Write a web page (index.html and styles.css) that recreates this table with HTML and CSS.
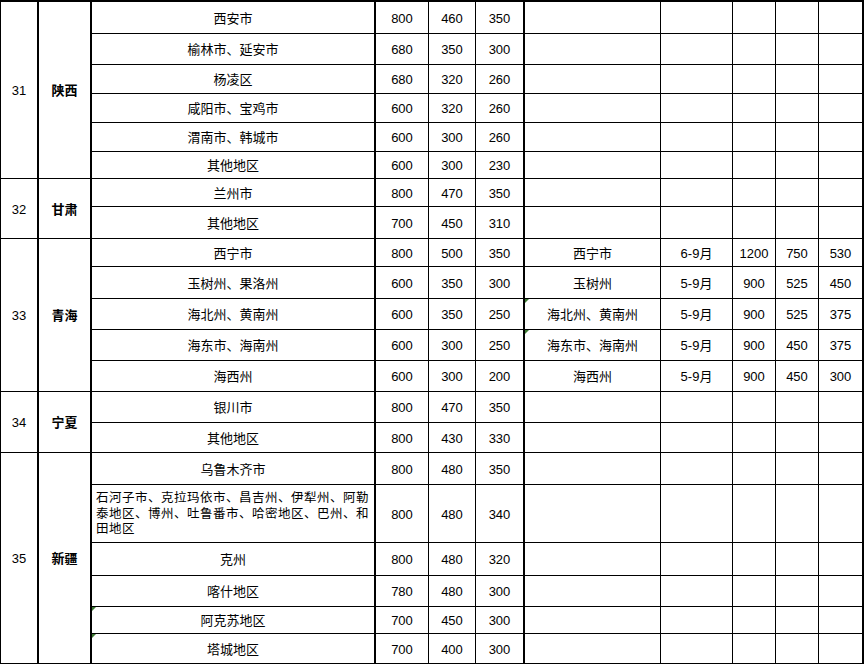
FILE: index.html
```html
<!DOCTYPE html>
<html lang="zh">
<head>
<meta charset="utf-8">
<title>住宿标准</title>
<link rel="stylesheet" href="styles.css">
</head>
<body>
<table class="grid">
  <colgroup>
    <col class="c1"><col class="c2"><col class="c3"><col class="c4"><col class="c5"><col class="c6">
    <col class="c7"><col class="c8"><col class="c9"><col class="c10"><col class="c11">
  </colgroup>
  <tbody>
    <tr class="h32">
      <td class="tk" rowspan="6">31</td><td class="tk prov" rowspan="6">陕西</td>
      <td class="tk">西安市</td><td>800</td><td>460</td><td class="tk">350</td>
      <td></td><td></td><td></td><td></td><td class="tk"></td>
    </tr>
    <tr class="h31"><td class="tk">榆林市、延安市</td><td>680</td><td>350</td><td class="tk">300</td><td></td><td></td><td></td><td></td><td class="tk"></td></tr>
    <tr class="h29"><td class="tk">杨凌区</td><td>680</td><td>320</td><td class="tk">260</td><td></td><td></td><td></td><td></td><td class="tk"></td></tr>
    <tr class="h29"><td class="tk">咸阳市、宝鸡市</td><td>600</td><td>320</td><td class="tk">260</td><td></td><td></td><td></td><td></td><td class="tk"></td></tr>
    <tr class="h29"><td class="tk">渭南市、韩城市</td><td>600</td><td>300</td><td class="tk">260</td><td></td><td></td><td></td><td></td><td class="tk"></td></tr>
    <tr class="h27"><td class="tk">其他地区</td><td>600</td><td>300</td><td class="tk">230</td><td></td><td></td><td></td><td></td><td class="tk"></td></tr>

    <tr class="h28">
      <td class="tk" rowspan="2">32</td><td class="tk prov" rowspan="2">甘肃</td>
      <td class="tk">兰州市</td><td>800</td><td>470</td><td class="tk">350</td><td></td><td></td><td></td><td></td><td class="tk"></td>
    </tr>
    <tr class="h32"><td class="tk">其他地区</td><td>700</td><td>450</td><td class="tk">310</td><td></td><td></td><td></td><td></td><td class="tk"></td></tr>

    <tr class="h28">
      <td class="tk" rowspan="5">33</td><td class="tk prov" rowspan="5">青海</td>
      <td class="tk">西宁市</td><td>800</td><td>500</td><td class="tk">350</td>
      <td>西宁市</td><td>6-9月</td><td>1200</td><td>750</td><td class="tk">530</td>
    </tr>
    <tr class="h32"><td class="tk">玉树州、果洛州</td><td>600</td><td>350</td><td class="tk">300</td><td>玉树州</td><td>5-9月</td><td>900</td><td>525</td><td class="tk">450</td></tr>
    <tr class="h31"><td class="tk">海北州、黄南州</td><td>600</td><td>350</td><td class="tk">250</td><td class="mark">海北州、黄南州</td><td>5-9月</td><td>900</td><td>525</td><td class="tk">375</td></tr>
    <tr class="h31"><td class="tk">海东市、海南州</td><td>600</td><td>300</td><td class="tk">250</td><td class="mark">海东市、海南州</td><td>5-9月</td><td>900</td><td>450</td><td class="tk">375</td></tr>
    <tr class="h31"><td class="tk">海西州</td><td>600</td><td>300</td><td class="tk">200</td><td>海西州</td><td>5-9月</td><td>900</td><td>450</td><td class="tk">300</td></tr>

    <tr class="h31">
      <td class="tk" rowspan="2">34</td><td class="tk prov" rowspan="2">宁夏</td>
      <td class="tk">银川市</td><td>800</td><td>470</td><td class="tk">350</td><td></td><td></td><td></td><td></td><td class="tk"></td>
    </tr>
    <tr class="h30"><td class="tk">其他地区</td><td>800</td><td>430</td><td class="tk">330</td><td></td><td></td><td></td><td></td><td class="tk"></td></tr>

    <tr class="h32">
      <td class="tk" rowspan="6">35</td><td class="tk prov" rowspan="6">新疆</td>
      <td class="tk">乌鲁木齐市</td><td>800</td><td>480</td><td class="tk">350</td><td></td><td></td><td></td><td></td><td class="tk"></td>
    </tr>
    <tr class="h58"><td class="tk long">石河子市、克拉玛依市、昌吉州、伊犁州、阿勒泰地区、博州、吐鲁番市、哈密地区、巴州、和田地区</td><td>800</td><td>480</td><td class="tk">340</td><td></td><td></td><td></td><td></td><td class="tk"></td></tr>
    <tr class="h33"><td class="tk">克州</td><td>800</td><td>480</td><td class="tk">320</td><td></td><td></td><td></td><td></td><td class="tk"></td></tr>
    <tr class="h31"><td class="tk">喀什地区</td><td>780</td><td>480</td><td class="tk">300</td><td></td><td></td><td></td><td></td><td class="tk"></td></tr>
    <tr class="h27"><td class="tk mark">阿克苏地区</td><td>700</td><td>450</td><td class="tk">300</td><td></td><td></td><td></td><td></td><td class="tk"></td></tr>
    <tr class="h30"><td class="tk mark">塔城地区</td><td>700</td><td>400</td><td class="tk">300</td><td></td><td></td><td></td><td></td><td class="tk"></td></tr>
  </tbody>
</table>
</body>
</html>
```

FILE: styles.css
```css
html, body {
  margin: 0;
  padding: 0;
  background: #ffffff;
}

.grid {
  table-layout: fixed;
  width: 864px;
  border-collapse: separate;
  border-spacing: 0;
  border-top: 2px solid #000;
  border-left: 1px solid #000;
  font-family: "Liberation Sans", "Noto Sans CJK SC", sans-serif;
  font-size: 13px;
  color: #000;
}

.c1 { width: 38px; }
.c2 { width: 53px; }
.c3 { width: 284px; }
.c4 { width: 53px; }
.c5 { width: 47px; }
.c6 { width: 49px; }
.c7 { width: 136px; }
.c8 { width: 72px; }
.c9 { width: 43px; }
.c10 { width: 43px; }
.c11 { width: 45px; }

.grid td {
  box-sizing: border-box;
  border-right: 1px solid #000;
  border-bottom: 1px solid #000;
  padding: 1px 0 0 0;
  text-align: center;
  vertical-align: middle;
  line-height: 15px;
  white-space: nowrap;
}

.grid td.tk {
  border-right-width: 2px;
}

.grid td.prov {
  font-weight: bold;
}

.grid td.long {
  white-space: normal;
  text-align: left;
  font-size: 12.5px;
  letter-spacing: 0.5px;
  padding: 2px 3px 0 4px;
  line-height: 15.5px;
  word-break: break-all;
}

.grid td.mark {
  position: relative;
}

.grid td.mark::before {
  content: "";
  position: absolute;
  left: 0;
  top: 0;
  border-top: 4px solid #3d7a33;
  border-right: 4px solid transparent;
}

.h27 { height: 27px; }
.h28 { height: 28px; }
.h29 { height: 29px; }
.h30 { height: 30px; }
.h31 { height: 31px; }
.h32 { height: 32px; }
.h33 { height: 33px; }
.h58 { height: 58px; }
```
